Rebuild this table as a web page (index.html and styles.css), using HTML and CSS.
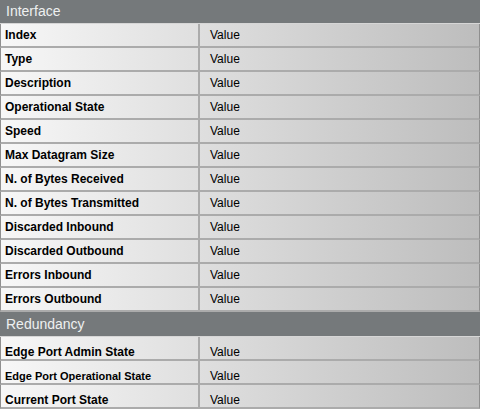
FILE: index.html
```html
<!DOCTYPE html>
<html>
<head>
<meta charset="utf-8">
<link rel="stylesheet" href="styles.css">
</head>
<body>
<div class="panel">
  <div class="section-head first">Interface</div>
  <div class="row"><div class="label">Index</div><div class="value">Value</div></div>
  <div class="row"><div class="label">Type</div><div class="value">Value</div></div>
  <div class="row"><div class="label">Description</div><div class="value">Value</div></div>
  <div class="row"><div class="label">Operational State</div><div class="value">Value</div></div>
  <div class="row"><div class="label">Speed</div><div class="value">Value</div></div>
  <div class="row"><div class="label">Max Datagram Size</div><div class="value">Value</div></div>
  <div class="row"><div class="label">N. of Bytes Received</div><div class="value">Value</div></div>
  <div class="row"><div class="label">N. of Bytes Transmitted</div><div class="value">Value</div></div>
  <div class="row"><div class="label">Discarded Inbound</div><div class="value">Value</div></div>
  <div class="row"><div class="label">Discarded Outbound</div><div class="value">Value</div></div>
  <div class="row"><div class="label">Errors Inbound</div><div class="value">Value</div></div>
  <div class="row"><div class="label">Errors Outbound</div><div class="value">Value</div></div>
  <div class="section-head">Redundancy</div>
  <div class="row low"><div class="label">Edge Port Admin State</div><div class="value">Value</div></div>
  <div class="row low"><div class="label small">Edge Port Operational State</div><div class="value">Value</div></div>
  <div class="row low"><div class="label">Current Port State</div><div class="value">Value</div></div>
</div>
</body>
</html>
```

FILE: styles.css
```css
html, body {
  margin: 0;
  padding: 0;
  background: #ffffff;
}
.panel {
  width: 480px;
  font-family: "Liberation Sans", Arial, sans-serif;
  font-size: 12px;
  color: #000;
}
.section-head {
  background: #75797b;
  color: #eef0f0;
  font-size: 14px;
  height: 25px;
  line-height: 25px;
  padding-left: 6px;
  box-sizing: border-box;
  border-bottom: 1px solid #d6d6d6;
}
.section-head.first {
  height: 24px;
  line-height: 22px;
}
.row {
  display: grid;
  grid-template-columns: 199px 1fr;
  height: 24px;
  box-sizing: border-box;
  background: linear-gradient(to right, #f7f7f7, #bdbdbd);
  border-left: 1px solid #8f8f8f;
  border-right: 1px solid #8f8f8f;
  border-bottom: 2px solid #ababab;
}
.label {
  font-weight: bold;
  padding-left: 4px;
  line-height: 22px;
  border-right: 2px solid #ababab;
  white-space: nowrap;
}
.label.small {
  font-size: 11px;
}
.value {
  padding-left: 10px;
  line-height: 22px;
}
.row.low .label,
.row.low .value {
  line-height: 14px;
  padding-top: 8px;
}
```
